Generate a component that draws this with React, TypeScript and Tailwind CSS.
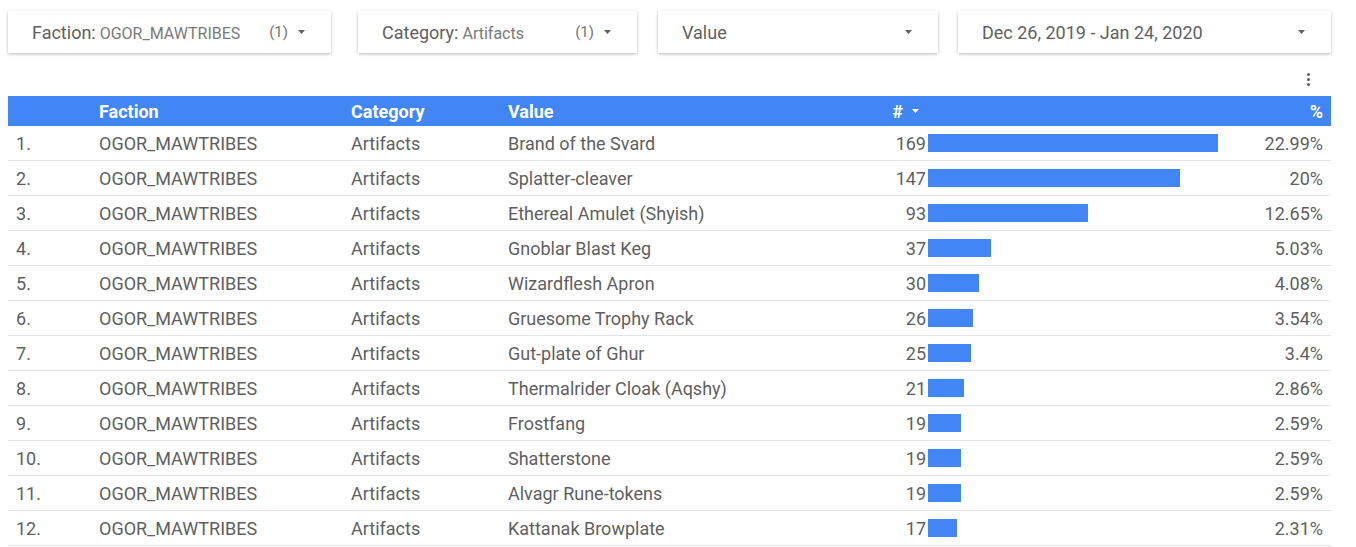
import React from "react";

const rows: [string, number, string][] = [
  ["Brand of the Svard", 169, "22.99%"],
  ["Splatter-cleaver", 147, "20%"],
  ["Ethereal Amulet (Shyish)", 93, "12.65%"],
  ["Gnoblar Blast Keg", 37, "5.03%"],
  ["Wizardflesh Apron", 30, "4.08%"],
  ["Gruesome Trophy Rack", 26, "3.54%"],
  ["Gut-plate of Ghur", 25, "3.4%"],
  ["Thermalrider Cloak (Aqshy)", 21, "2.86%"],
  ["Frostfang", 19, "2.59%"],
  ["Shatterstone", 19, "2.59%"],
  ["Alvagr Rune-tokens", 19, "2.59%"],
  ["Kattanak Browplate", 17, "2.31%"],
];

function Caret({ color = "#616161" }: { color?: string }) {
  return (
    <svg width="7" height="4" viewBox="0 0 7 4" className="shrink-0">
      <path d="M0 0 L7 0 L3.5 4 Z" fill={color} />
    </svg>
  );
}

function Filter({
  label,
  value,
  count,
  width,
  className = "",
}: {
  label: string;
  value?: string;
  count?: string;
  width: string;
  className?: string;
}) {
  return (
    <div
      className={`${width} ${className} h-[42px] flex items-center pl-6 pr-[26px] bg-white shadow-[0_1px_3px_rgba(0,0,0,0.28)]`}
    >
      <div className="flex-1 flex items-baseline whitespace-nowrap">
        <span className="text-[18px] text-[#616161]">{label}</span>
        {value && <span className="text-[16px] text-[#7a7a7a] ml-1">{value}</span>}
      </div>
      {count && <span className="text-[15px] text-[#757575] mr-[10px]">{count}</span>}
      <Caret />
    </div>
  );
}

export default function App() {
  const max = 169;
  return (
    <div
      className="w-[1356px] h-[547px] bg-white overflow-hidden"
      style={{ fontFamily: "Roboto, 'Liberation Sans', sans-serif" }}
    >
      <div className="flex pt-[11px]">
        <Filter label="Faction:" value="OGOR_MAWTRIBES" count="(1)" width="w-[323px]" className="ml-2" />
        <Filter label="Category:" value="Artifacts" count="(1)" width="w-[279px]" className="ml-[27px]" />
        <Filter label="Value" width="w-[280px]" className="ml-[21px]" />
        <Filter label="Dec 26, 2019 - Jan 24, 2020" width="w-[373px]" className="ml-5" />
      </div>
      <div className="h-[43px] flex justify-end items-center pr-[46px] pt-[10px]">
        <div className="flex flex-col gap-[2px]">
          <span className="w-[3px] h-[3px] rounded-full bg-[#5f5f5f]" />
          <span className="w-[3px] h-[3px] rounded-full bg-[#5f5f5f]" />
          <span className="w-[3px] h-[3px] rounded-full bg-[#5f5f5f]" />
        </div>
      </div>
      <div className="mx-2 w-[1323px]">
        <div className="h-[30px] bg-[#4285f4] flex items-center text-white font-bold text-[18px]">
          <div className="w-[91px]" />
          <div className="w-[252px]">Faction</div>
          <div className="w-[157px]">Category</div>
          <div className="w-[358px]">Value</div>
          <div className="w-[60px] flex items-center justify-end pr-[7px] gap-[9px]">
            <span>#</span>
            <Caret color="#ffffff" />
          </div>
          <div className="w-[307px]" />
          <div className="w-[98px] text-right pr-2">%</div>
        </div>
        {rows.map(([v, n, p], i) => (
          <div
            key={i}
            className="h-[35px] flex items-center border-b border-[#e4e4e4] text-[18px] text-[#5f5f5f]"
          >
            <div className="w-[91px] pl-2">{i + 1}.</div>
            <div className="w-[252px]">OGOR_MAWTRIBES</div>
            <div className="w-[157px]">Artifacts</div>
            <div className="w-[358px] whitespace-nowrap">{v}</div>
            <div className="w-[60px] text-right">{n}</div>
            <div className="w-[307px] pl-[2px] flex items-center">
              <div className="h-[18px] bg-[#4285f4]" style={{ width: `${(n / max) * 290}px` }} />
            </div>
            <div className="w-[98px] text-right pr-2">{p}</div>
          </div>
        ))}
      </div>
    </div>
  );
}
